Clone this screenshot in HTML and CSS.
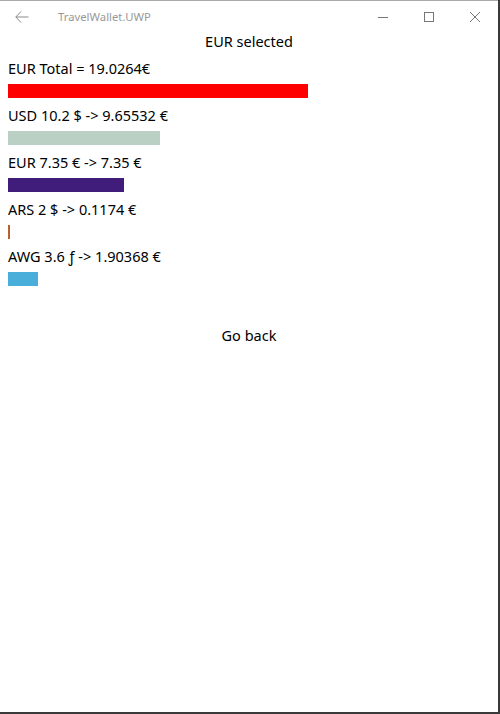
FILE: index.html
```html
<!DOCTYPE html>
<html>
<head>
<meta charset="utf-8">
<link rel="stylesheet" href="styles.css">
</head>
<body>
<div class="window">
  <div class="titlebar">
    <div class="back">
      <svg width="14" height="12" viewBox="0 0 14 12"><path d="M6 0.5 L0.8 6 L6 11.5 M0.8 6 H13.5" fill="none" stroke="#8a8a8a" stroke-width="1"/></svg>
    </div>
    <div class="apptitle">TravelWallet.UWP</div>
    <div class="controls">
      <div class="ctl"><svg width="10" height="10" viewBox="0 0 10 10"><path d="M0 5.5 H10" stroke="#777" stroke-width="1"/></svg></div>
      <div class="ctl"><svg width="10" height="10" viewBox="0 0 10 10"><rect x="0.5" y="0.5" width="9" height="9" fill="none" stroke="#777" stroke-width="1"/></svg></div>
      <div class="ctl"><svg width="10" height="10" viewBox="0 0 10 10"><path d="M0 0 L10 10 M10 0 L0 10" stroke="#777" stroke-width="1"/></svg></div>
    </div>
  </div>
  <div class="content">
    <div class="heading">EUR selected</div>
    <div class="item">
      <div class="label">EUR Total = 19.0264€</div>
      <div class="bar red" style="width:300px"></div>
    </div>
    <div class="item">
      <div class="label">USD 10.2 $ -&gt; 9.65532 €</div>
      <div class="bar sage" style="width:152px"></div>
    </div>
    <div class="item">
      <div class="label">EUR 7.35 € -&gt; 7.35 €</div>
      <div class="bar purple" style="width:116px"></div>
    </div>
    <div class="item">
      <div class="label">ARS 2 $ -&gt; 0.1174 €</div>
      <div class="bar rust" style="width:2px"></div>
    </div>
    <div class="item">
      <div class="label">AWG 3.6 ƒ -&gt; 1.90368 €</div>
      <div class="bar sky" style="width:30px"></div>
    </div>
    <div class="goback">Go back</div>
  </div>
</div>
</body>
</html>
```
FILE: styles.css
```css
html, body {
  margin: 0;
  padding: 0;
  background: #3a3a3a;
  width: 500px;
  height: 714px;
  overflow: hidden;
}
body {
  font-family: "Noto Sans", "Open Sans", sans-serif;
  color: #000;
}
.window {
  width: 498px;
  height: 711px;
  background: #fff;
  border-top: 1px solid #a9a9a9;
  display: flex;
  flex-direction: column;
}
.titlebar {
  height: 31px;
  display: flex;
  align-items: center;
}
.back {
  width: 44px;
  display: flex;
  justify-content: center;
  margin-right: 14px;
}
.apptitle {
  font-size: 11.3px;
  color: #999;
  flex: 1;
  padding-bottom: 1px;
}
.controls {
  display: flex;
}
.ctl {
  width: 46px;
  display: flex;
  justify-content: center;
  align-items: center;
}
.content {
  padding: 0 8px;
  font-size: 14.5px;
}
.heading {
  text-align: center;
  line-height: 20px;
  margin-top: -1px;
}
.item {
  margin-top: 8px;
}
.label {
  line-height: 18px;
  height: 20px;
}
.bar {
  height: 14px;
  margin-top: 5px;
}
.red { background: #ff0000; }
.sage { background: #bbd0c5; }
.purple { background: #411d7b; }
.rust { background: #b8632b; }
.sky { background: #4aaedb; }
.goback {
  text-align: center;
  line-height: 20px;
  margin-top: 39px;
}
```
